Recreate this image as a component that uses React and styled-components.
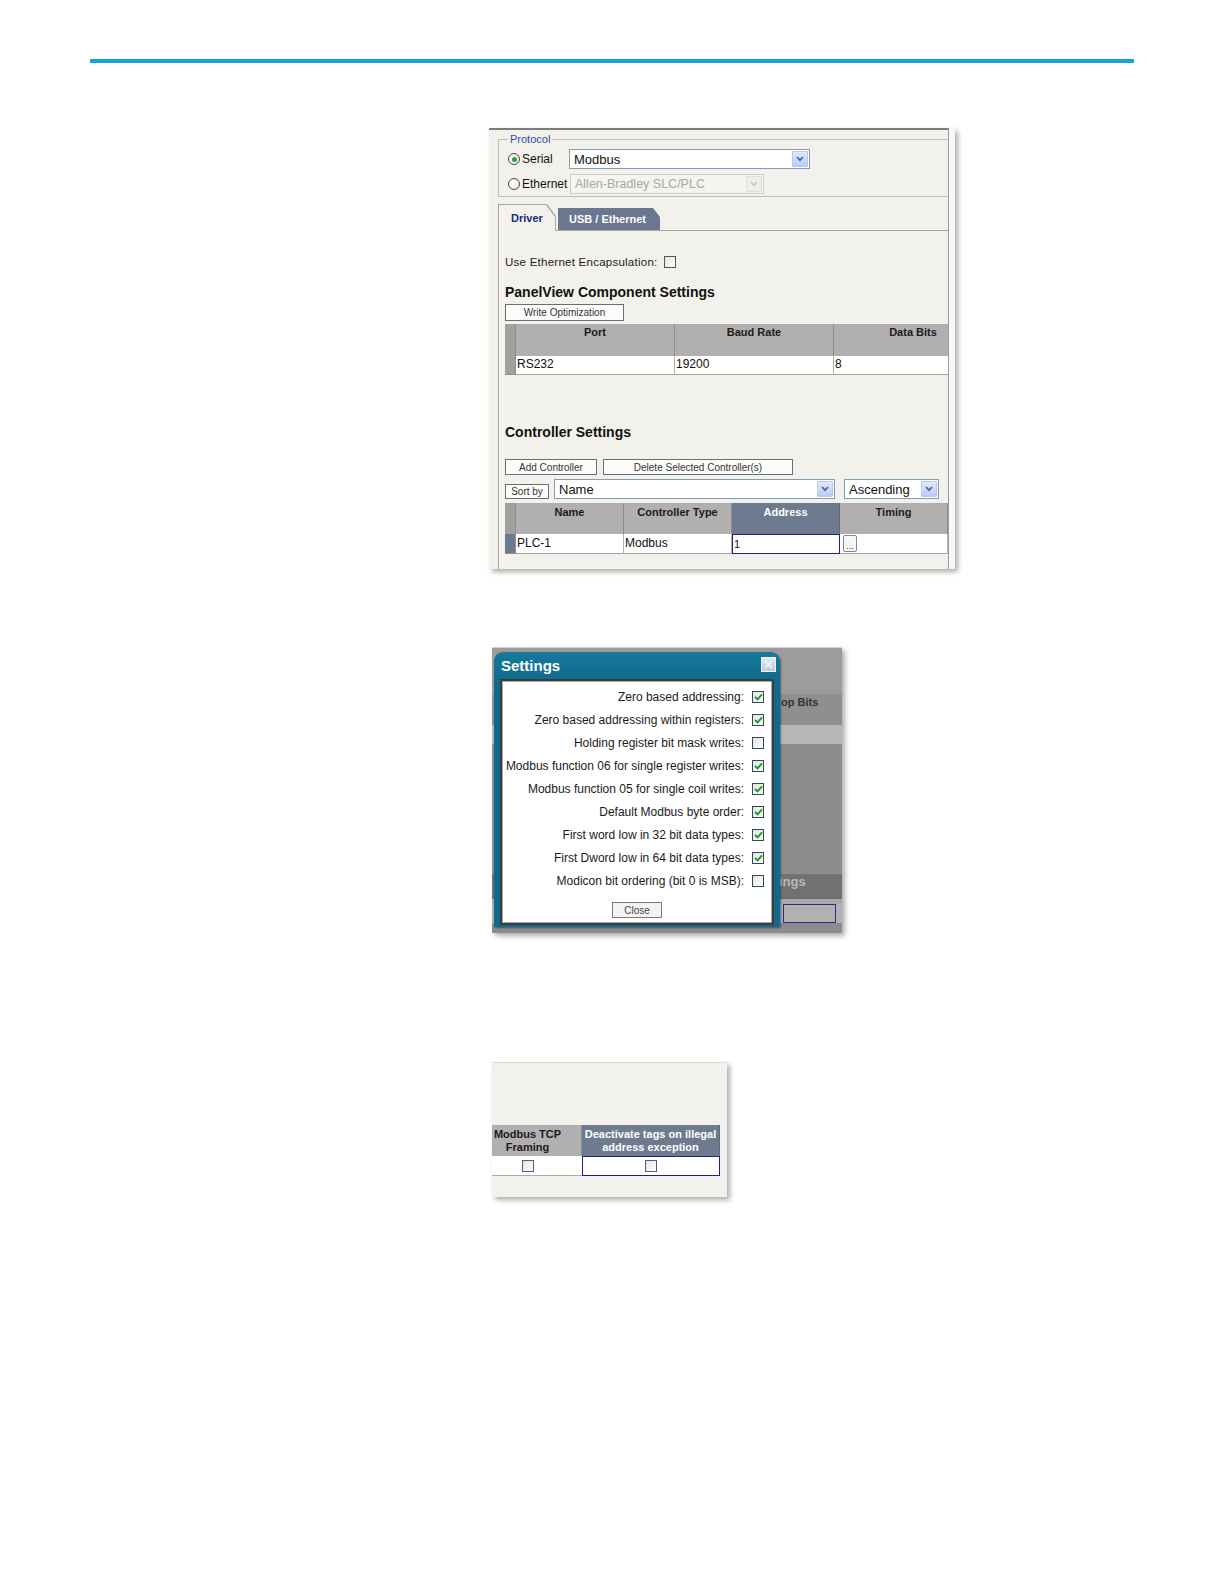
import React from "react";
import styled, { createGlobalStyle } from "styled-components";

const GlobalStyle = createGlobalStyle`
  html, body { margin: 0; padding: 0; background: #ffffff; }
  body { font-family: "Liberation Sans", Arial, sans-serif; color: #111; }
  * { box-sizing: border-box; }
`;

const Page = styled.div`
  width: 1224px;
  min-height: 1584px;
  padding-top: 59px;
  background: #fff;
`;

const Rule = styled.div`
  margin-left: 90px;
  width: 1044px;
  height: 4px;
  background: #17a5d8;
`;

const Figures = styled.div`
  display: flex;
  flex-direction: column;
  align-items: flex-start;
`;

const Shot = styled.div`
  position: relative;
  flex-shrink: 0;
  overflow: hidden;
  width: ${p => p.$w}px;
  height: ${p => p.$h}px;
  margin-top: ${p => p.$top}px;
  margin-left: ${p => p.$left}px;
  background: ${p => p.$bg || "#f3f1ec"};
  box-shadow: 3px 3px 5px rgba(0, 0, 0, 0.32);
`;

/* ---------- shot 1 : protocol / driver ---------- */

const Frame = styled.div`
  width: 460px;
  height: 100%;
  background: #f3f1ec;
  border-top: 2px solid #7c7c7c;
  border-right: 1px solid #9d9b96;
  display: flex;
  flex-direction: column;
  align-items: flex-start;
  overflow: hidden;
`;

const Fieldset = styled.fieldset`
  flex-shrink: 0;
  width: 470px;
  min-width: 0;
  margin: 2px 0 0 9px;
  padding: 0 0 2px 9px;
  border: 1px solid #bfbdb6;
  border-right: none;
`;

const Legend = styled.legend`
  font-size: 11px;
  line-height: 14px;
  color: #2a4ea8;
  padding: 0 2px;
`;

const FieldRow = styled.div`
  display: flex;
  align-items: center;
  height: 20px;
  margin-top: ${p => p.$mt}px;
`;

const RadioLabel = styled.label`
  display: flex;
  align-items: center;
  gap: 2px;
  width: 61px;
  font-size: 12px;
  color: #111;
`;

const RadioDot = styled.span`
  width: 12px;
  height: 12px;
  border-radius: 50%;
  border: 1px solid #4a4a4a;
  background: radial-gradient(circle at 40% 40%, #ffffff, #e4e3de);
  display: flex;
  align-items: center;
  justify-content: center;

  &::after {
    content: "";
    width: 5px;
    height: 5px;
    border-radius: 50%;
    background: ${p => (p.$on ? "#2f9f36" : "transparent")};
  }
`;

const SelectBox = styled.div`
  width: ${p => p.$w}px;
  height: 20px;
  margin-left: ${p => p.$ml || 0}px;
  display: flex;
  align-items: center;
  justify-content: space-between;
  padding: 0 1px 0 4px;
  border: 1px solid ${p => (p.$disabled ? "#cfccc3" : "#7f9db9")};
  background: ${p => (p.$disabled ? "#f5f4ef" : "#ffffff")};
  color: ${p => (p.$disabled ? "#a9a79f" : "#111")};
  font-size: ${p => p.$fs || 12.5}px;
  flex-shrink: 0;
`;

const ArrowBox = styled.span`
  width: 16px;
  height: 16px;
  display: flex;
  align-items: center;
  justify-content: center;
  border: 1px solid ${p => (p.$disabled ? "#e0ddd6" : "#b6c8ee")};
  background: ${p =>
    p.$disabled ? "#efeee9" : "linear-gradient(#e2eafd, #b8cbf4)"};
  border-radius: 1px;
`;

const Select = ({ w, ml, fs, disabled, children }) => (
  <SelectBox $w={w} $ml={ml} $fs={fs} $disabled={disabled}>
    <span>{children}</span>
    <ArrowBox $disabled={disabled}>
      <svg width="8" height="6" viewBox="0 0 8 6">
        <path
          d="M1 1 L4 4.2 L7 1"
          stroke={disabled ? "#c9c7c1" : "#4964a6"}
          strokeWidth="1.7"
          fill="none"
        />
      </svg>
    </ArrowBox>
  </SelectBox>
);

const TabBar = styled.div`
  flex-shrink: 0;
  width: 470px;
  height: 27px;
  margin: 7px 0 0 9px;
  display: flex;
  align-items: flex-end;
  border-bottom: 1px solid #a8a6a0;
`;

const ActiveTabEdge = styled.div`
  position: relative;
  z-index: 1;
  width: 58px;
  height: 27px;
  margin-bottom: -1px;
  padding: 1px 1px 0 1px;
  background: #a8a6a0;
  clip-path: polygon(0 0, calc(100% - 9px) 0, 100% 12px, 100% 100%, 0 100%);
`;

const ActiveTabFace = styled.div`
  height: 100%;
  display: flex;
  align-items: center;
  padding-left: 12px;
  background: #f3f1ec;
  clip-path: polygon(0 0, calc(100% - 9px) 0, 100% 12px, 100% 100%, 0 100%);
  font-size: 11px;
  font-weight: bold;
  color: #1d2a7c;
`;

const Tab = styled.div`
  width: 102px;
  height: 22px;
  margin-left: 2px;
  display: flex;
  align-items: center;
  padding-left: 11px;
  background: #6b768f;
  clip-path: polygon(0 0, calc(100% - 7px) 0, 100% 9px, 100% 100%, 0 100%);
  font-size: 11px;
  font-weight: bold;
  color: #ffffff;
`;

const Panel = styled.div`
  flex: 1;
  flex-shrink: 0;
  width: 470px;
  margin-left: 9px;
  padding-left: 6px;
  border-left: 1px solid #a8a6a0;
  display: flex;
  flex-direction: column;
  align-items: flex-start;
`;

const InlineRow = styled.div`
  display: flex;
  align-items: ${p => p.$align || "center"};
  gap: ${p => p.$gap || 0}px;
  margin-top: ${p => p.$mt}px;
  height: ${p => p.$h}px;
  font-size: 11.5px;
  letter-spacing: ${p => p.$ls || 0}px;
  color: #1a1a1a;
`;

const Box = styled.span`
  width: 12px;
  height: 12px;
  flex-shrink: 0;
  display: inline-flex;
  align-items: center;
  justify-content: center;
  border: 1px solid ${p => p.$border || "#555"};
  background: linear-gradient(135deg, #e3e3e0, #ffffff);
`;

const Checkbox = ({ checked, border }) => (
  <Box $border={border}>
    {checked && (
      <svg width="9" height="8" viewBox="0 0 9 8">
        <path d="M1 4 L3.6 6.4 L8 1.4" stroke="#1f9a25" strokeWidth="2" fill="none" />
      </svg>
    )}
  </Box>
);

const SectionTitle = styled.div`
  margin-top: ${p => p.$mt}px;
  font-size: 14px;
  line-height: 17px;
  font-weight: bold;
  color: #111;
`;

const PlainButton = styled.div`
  width: ${p => p.$w}px;
  height: ${p => p.$h}px;
  margin-top: ${p => p.$mt || 0}px;
  flex-shrink: 0;
  display: flex;
  align-items: center;
  justify-content: center;
  border: 1px solid #6d6d6d;
  background: #fcfcfc;
  font-size: 10px;
  letter-spacing: 0;
  color: #333;
`;

const Grid = styled.div`
  flex-shrink: 0;
  margin-top: ${p => p.$mt}px;
  display: grid;
  grid-template-columns: ${p => p.$cols};
  grid-template-rows: ${p => p.$head}px ${p => p.$row}px;
  width: max-content;
`;

const HeadCell = styled.div`
  background: ${p => (p.$active ? "#6e7a8f" : "#b1afaf")};
  color: ${p => (p.$active ? "#ffffff" : "#1b1b1b")};
  border-right: 1px solid ${p => (p.$active ? "#5d6a80" : "#8f8d8d")};
  font-size: 11px;
  font-weight: bold;
  line-height: ${p => p.$lh || 14}px;
  padding-top: ${p => p.$pt || 1}px;
  text-align: center;
`;

const Indicator = styled.div`
  background: ${p => p.$color};
  border-right: 1px solid #8f8d8d;
  border-bottom: ${p => (p.$row ? "1px solid #8f8d8d" : "none")};
`;

const Cell = styled.div`
  background: #ffffff;
  border-right: 1px solid #b3b1b1;
  border-bottom: 1px solid #a7a5a5;
  font-size: 12px;
  line-height: ${p => p.$lh || 17}px;
  padding-left: 1px;
  color: #111;
`;

const EditCell = styled.div`
  background: #ffffff;
  border: 1px solid #1f1f87;
  font-size: 11px;
  line-height: 18px;
  padding-left: 1px;
`;

const CenterCell = styled.div`
  display: flex;
  align-items: center;
  justify-content: center;
  background: #ffffff;
  border: ${p => (p.$edit ? "1px solid #1f1f87" : "none")};
  border-bottom: 1px solid ${p => (p.$edit ? "#1f1f87" : "#aaa8a8")};
`;

const EllipsisButton = styled.span`
  display: inline-flex;
  align-items: flex-end;
  justify-content: center;
  width: 14px;
  height: 17px;
  margin: 1px 0 0 2px;
  border: 1px solid #7b8aa2;
  border-radius: 2px;
  background: #f6f6f6;
  font-size: 9px;
  line-height: 10px;
  color: #333;
`;

const ProtocolShot = () => (
  <Shot $w={466} $h={441} $top={65} $left={489} $bg="#f8f8f6">
    <Frame>
      <Fieldset>
        <Legend>Protocol</Legend>
        <FieldRow $mt={3}>
          <RadioLabel>
            <RadioDot $on />
            Serial
          </RadioLabel>
          <Select w={241} fs={13}>Modbus</Select>
        </FieldRow>
        <FieldRow $mt={5}>
          <RadioLabel>
            <RadioDot />
            Ethernet
          </RadioLabel>
          <Select w={194} ml={1} disabled>
            Allen-Bradley SLC/PLC
          </Select>
        </FieldRow>
      </Fieldset>

      <TabBar>
        <ActiveTabEdge>
          <ActiveTabFace>Driver</ActiveTabFace>
        </ActiveTabEdge>
        <Tab>USB / Ethernet</Tab>
      </TabBar>

      <Panel>
        <InlineRow $mt={24} $h={14} $gap={6} $ls={0.25}>
          Use Ethernet Encapsulation:
          <Checkbox />
        </InlineRow>

        <SectionTitle $mt={15}>PanelView Component Settings</SectionTitle>
        <PlainButton $w={119} $h={17} $mt={3}>
          Write Optimization
        </PlainButton>

        <Grid $mt={3} $cols="11px 159px 159px 159px" $head={32} $row={19}>
          <Indicator $color="#a2a0a0" />
          <HeadCell>Port</HeadCell>
          <HeadCell>Baud Rate</HeadCell>
          <HeadCell>Data Bits</HeadCell>
          <Indicator $color="#a2a0a0" $row />
          <Cell>RS232</Cell>
          <Cell>19200</Cell>
          <Cell>8</Cell>
        </Grid>

        <SectionTitle $mt={49}>Controller Settings</SectionTitle>
        <InlineRow $mt={18} $h={16} $gap={6}>
          <PlainButton $w={92} $h={16}>Add Controller</PlainButton>
          <PlainButton $w={190} $h={16}>Delete Selected Controller(s)</PlainButton>
        </InlineRow>
        <InlineRow $mt={4} $h={20} $align="flex-end">
          <PlainButton $w={44} $h={15}>Sort by</PlainButton>
          <Select w={281} ml={5} fs={13}>Name</Select>
          <Select w={95} ml={9} fs={13}>Ascending</Select>
        </InlineRow>

        <Grid $mt={4} $cols="11px 108px 108px 108px 108px 60px" $head={31} $row={20}>
          <Indicator $color="#a2a0a0" />
          <HeadCell $pt={2}>Name</HeadCell>
          <HeadCell $pt={2}>Controller Type</HeadCell>
          <HeadCell $pt={2} $active>Address</HeadCell>
          <HeadCell $pt={2}>Timing</HeadCell>
          <HeadCell $pt={2} />
          <Indicator $color="#6e7a8f" $row />
          <Cell $lh={18}>PLC-1</Cell>
          <Cell $lh={18}>Modbus</Cell>
          <EditCell>1</EditCell>
          <Cell $lh={18}>
            <EllipsisButton>...</EllipsisButton>
          </Cell>
          <Cell />
        </Grid>
      </Panel>
    </Frame>
  </Shot>
);

/* ---------- shot 2 : settings dialog ---------- */

const Backdrop = styled.div`
  display: flex;
  flex-direction: column;
  height: 100%;
`;

const Band = styled.div`
  flex-shrink: 0;
  height: ${p => p.$h}px;
  background: ${p => p.$bg};
  padding-left: ${p => p.$pl || 0}px;
  padding-top: ${p => p.$pt || 0}px;
  font-weight: bold;
  font-size: ${p => p.$fs || 11}px;
  line-height: 14px;
  color: ${p => p.$color || "#333"};
`;

const GhostInput = styled.div`
  width: 53px;
  height: 19px;
  margin-left: 291px;
  border: 1px solid #2b2b8c;
`;

const Dialog = styled.div`
  position: absolute;
  left: 2px;
  top: 5px;
  width: 286px;
  height: 275px;
  display: flex;
  flex-direction: column;
  background: linear-gradient(#17799c, #0f6a8c 30px);
  border-radius: 9px 9px 0 0;
  box-shadow: 1px 1px 2px rgba(0, 0, 0, 0.4);
`;

const TitleBar = styled.div`
  height: 27px;
  flex-shrink: 0;
  display: flex;
  align-items: center;
  justify-content: space-between;
  padding: 0 4px 0 7px;
`;

const DialogTitle = styled.span`
  font-size: 15px;
  font-weight: bold;
  color: #ffffff;
`;

const CloseBox = styled.span`
  width: 15px;
  height: 15px;
  margin-top: -2px;
  display: flex;
  align-items: center;
  justify-content: center;
  border: 1px solid #eef3f6;
  background: linear-gradient(#dfe7ec, #bccbd5);
`;

const DialogBody = styled.div`
  flex: 1;
  margin: 0 6px 2px 6px;
  padding: 4px 8px 5px 0;
  display: flex;
  flex-direction: column;
  background: #ffffff;
  border: 2px solid #3d3d3d;
  box-shadow: inset 0 0 0 1px #a7a7a7;
`;

const OptionRow = styled.div`
  height: 23px;
  display: flex;
  align-items: center;
  justify-content: flex-end;
  gap: 8px;
  font-size: 12px;
  color: #1a1a1a;
`;

const DialogButton = styled.div`
  align-self: center;
  width: 50px;
  height: 16px;
  margin-top: 10px;
  margin-left: 8px;
  display: flex;
  align-items: center;
  justify-content: center;
  border: 1px solid #7a7a7a;
  background: #f3f3f3;
  font-size: 10px;
  color: #444;
`;

const options = [
  ["Zero based addressing:", true],
  ["Zero based addressing within registers:", true],
  ["Holding register bit mask writes:", false],
  ["Modbus function 06 for single register writes:", true],
  ["Modbus function 05 for single coil writes:", true],
  ["Default Modbus byte order:", true],
  ["First word low in 32 bit data types:", true],
  ["First Dword low in 64 bit data types:", true],
  ["Modicon bit ordering (bit 0 is MSB):", false],
];

const SettingsShot = () => (
  <Shot $w={350} $h={286} $top={78} $left={492} $bg="#8e8e8e">
    <Backdrop>
      <Band $h={1} $bg="#d4d4d4" />
      <Band $h={46} $bg="#9c9c9c" />
      <Band $h={31} $bg="#8f8f8f" $pl={289} $pt={1}>op Bits</Band>
      <Band $h={19} $bg="#b7b7b7" />
      <Band $h={130} $bg="#8d8d8d" />
      <Band $h={25} $bg="#717171" $pl={287} $pt={1} $fs={13} $color="#b9b9b9">
        ings
      </Band>
      <Band $h={5} $bg="#a9a9a9" />
      <Band $h={19} $bg="#b1b1b1">
        <GhostInput />
      </Band>
      <Band $h={10} $bg="#8c8c8c" />
    </Backdrop>

    <Dialog>
      <TitleBar>
        <DialogTitle>Settings</DialogTitle>
        <CloseBox>
          <svg width="9" height="9" viewBox="0 0 9 9">
            <path d="M1 1 L8 8 M8 1 L1 8" stroke="#f4f7f9" strokeWidth="1.4" />
          </svg>
        </CloseBox>
      </TitleBar>
      <DialogBody>
        {options.map(([label, on]) => (
          <OptionRow key={label}>
            {label}
            <Checkbox checked={on} border="#30495c" />
          </OptionRow>
        ))}
        <DialogButton>Close</DialogButton>
      </DialogBody>
    </Dialog>
  </Shot>
);

/* ---------- shot 3 : tcp framing columns ---------- */

const TopEdge = styled.div`
  height: 1px;
  background: #dddbd6;
`;

const Columns = styled(Grid)`
  margin-top: 62px;
  margin-left: -18px;
`;

const TcpShot = () => (
  <Shot $w={235} $h={135} $top={129} $left={492}>
    <TopEdge />
    <Columns $cols="108px 138px" $head={31} $row={20}>
      <HeadCell $lh={13} $pt={3}>
        Modbus TCP
        <br />
        Framing
      </HeadCell>
      <HeadCell $lh={13} $pt={3} $active>
        Deactivate tags on illegal
        <br />
        address exception
      </HeadCell>
      <CenterCell>
        <Checkbox border="#4f6272" />
      </CenterCell>
      <CenterCell $edit>
        <Checkbox border="#4f6272" />
      </CenterCell>
    </Columns>
  </Shot>
);

export default function App() {
  return (
    <>
      <GlobalStyle />
      <Page>
        <Rule />
        <Figures>
          <ProtocolShot />
          <SettingsShot />
          <TcpShot />
        </Figures>
      </Page>
    </>
  );
}
